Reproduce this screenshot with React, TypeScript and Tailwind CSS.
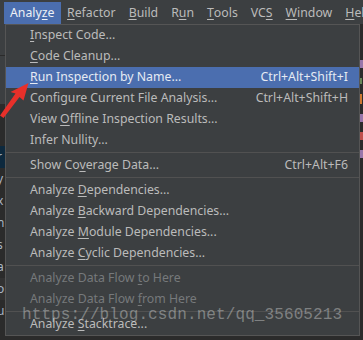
import * as React from "react"

type Entry =
  | { kind: "item"; pre: string; key?: string; post?: string; shortcut?: string; active?: boolean; disabled?: boolean }
  | { kind: "sep" }

const entries: Entry[] = [
  { kind: "item", pre: "", key: "I", post: "nspect Code..." },
  { kind: "item", pre: "", key: "C", post: "ode Cleanup..." },
  { kind: "item", pre: "", key: "R", post: "un Inspection by Name...", shortcut: "Ctrl+Alt+Shift+I", active: true },
  { kind: "item", pre: "Configure Current File Analysis...", shortcut: "Ctrl+Alt+Shift+H" },
  { kind: "item", pre: "View ", key: "O", post: "ffline Inspection Results..." },
  { kind: "item", pre: "Infer Nullity..." },
  { kind: "sep" },
  { kind: "item", pre: "Show Co", key: "v", post: "erage Data...", shortcut: "Ctrl+Alt+F6" },
  { kind: "sep" },
  { kind: "item", pre: "Analyze ", key: "D", post: "ependencies..." },
  { kind: "item", pre: "Analyze ", key: "B", post: "ackward Dependencies..." },
  { kind: "item", pre: "Analyze ", key: "M", post: "odule Dependencies..." },
  { kind: "item", pre: "Analyze ", key: "C", post: "yclic Dependencies..." },
  { kind: "sep" },
  { kind: "item", pre: "Analyze Data Flow ", key: "t", post: "o Here", disabled: true },
  { kind: "item", pre: "Analyze Data Flow ", key: "f", post: "rom Here", disabled: true },
  { kind: "sep" },
  { kind: "item", pre: "Analyze ", key: "S", post: "tacktrace..." },
]

const menus: { pre: string; key: string; post: string }[] = [
  { pre: "Analy", key: "z", post: "e" },
  { pre: "", key: "R", post: "efactor" },
  { pre: "", key: "B", post: "uild" },
  { pre: "R", key: "u", post: "n" },
  { pre: "", key: "T", post: "ools" },
  { pre: "VC", key: "S", post: "" },
  { pre: "", key: "W", post: "indow" },
  { pre: "", key: "H", post: "elp" },
]

const codeChars = ["r", "y", "x", "n", "s", "a", "o", "u"]

export default function App() {
  return (
    <div className="relative w-[363px] h-[340px] overflow-hidden bg-[#2b2b2b] font-['Noto_Sans',sans-serif] text-[12px] leading-none">
      {/* menu bar */}
      <div className="flex h-[24px] bg-[#3c3f41] pl-[4px] pt-[2px] whitespace-nowrap text-[12.3px]">
        {menus.map((m, i) => (
          <div
            key={i}
            className={
              i === 0
                ? "flex items-center px-[6px] bg-[#4b6eaf] text-[#eef1f6]"
                : "flex items-center px-[6.5px] text-[#bbbbbb]"
            }
          >
            {m.pre}
            <span className="underline underline-offset-2">{m.key}</span>
            {m.post}
          </div>
        ))}
      </div>

      <div className="flex">
        {/* editor edge on the left */}
        <div className="w-[5px] flex flex-col text-[#a9b7c6] text-[12px] overflow-hidden">
          <div className="h-[32px] bg-[#3c3f41] border-b border-[#2b2b2b]" />
          <div className="h-[48px] bg-[#3c3f41]" />
          <div className="h-[20px]" />
          <div className="h-[22px] flex items-center">&nbsp;</div>
          {codeChars.map((c, i) => (
            <div
              key={i}
              className={
                i === 0
                  ? "h-[22px] flex items-center bg-[#0d293e] -ml-[3px]"
                  : i === 6
                  ? "h-[22px] flex items-center bg-[#323232] -ml-[3px]"
                  : "h-[22px] flex items-center -ml-[3px]"
              }
            >
              {c}
            </div>
          ))}
        </div>

        {/* popup */}
        <div className="w-[355px] border border-[#555555] bg-[#3c3f41] whitespace-nowrap text-[12.3px]">
          {entries.map((e, i) =>
            e.kind === "sep" ? (
              <div key={i} className="h-[4px] pt-[1px]">
                <div className="h-px bg-[#515151]" />
              </div>
            ) : (
              <div
                key={i}
                className={
                  e.active
                    ? "flex items-center justify-between h-[21px] pl-[24px] pr-[11px] bg-[#4b6eaf] text-[#e6ebf3]"
                    : e.disabled
                    ? "flex items-center justify-between h-[21px] pl-[24px] pr-[11px] text-[#76797b]"
                    : "flex items-center justify-between h-[21px] pl-[24px] pr-[11px] text-[#bbbbbb]"
                }
              >
                <span>
                  {e.pre}
                  {e.key && <span className="underline underline-offset-2">{e.key}</span>}
                  {e.post}
                </span>
                {e.shortcut && <span>{e.shortcut}</span>}
              </div>
            )
          )}
        </div>

        {/* editor edge on the right */}
        <div className="flex-1 flex flex-col pt-[36px] gap-[10px]">
          <div className="h-[8px] w-[3px] bg-[#9876aa]" />
          <div className="h-[6px] w-[2px] bg-[#6a8759]" />
          <div className="h-[10px] w-[2px] bg-[#cc7832]" />
          <div className="h-[8px] w-[3px] bg-[#9876aa]" />
          <div className="h-[8px] w-[3px] bg-[#c0504d]" />
          <div className="h-[8px] w-[3px] bg-[#9876aa]" />
        </div>
      </div>

      {/* red arrow */}
      <svg className="absolute left-0 top-[80px]" width="32" height="40" viewBox="0 0 32 40">
        <polygon
          points="28.5,3 23.5,20.5 19.5,17 3.5,38 0,35.5 15.5,13.5 10.5,12"
          fill="#e8302a"
        />
      </svg>

      {/* watermark */}
      <div className="absolute left-[22px] top-[307px] font-['Liberation_Mono',monospace] text-[16px] leading-none text-white/35 tracking-[0.1px] pointer-events-none">
        https://blog.csdn.net/qq_35605213
      </div>
    </div>
  )
}
